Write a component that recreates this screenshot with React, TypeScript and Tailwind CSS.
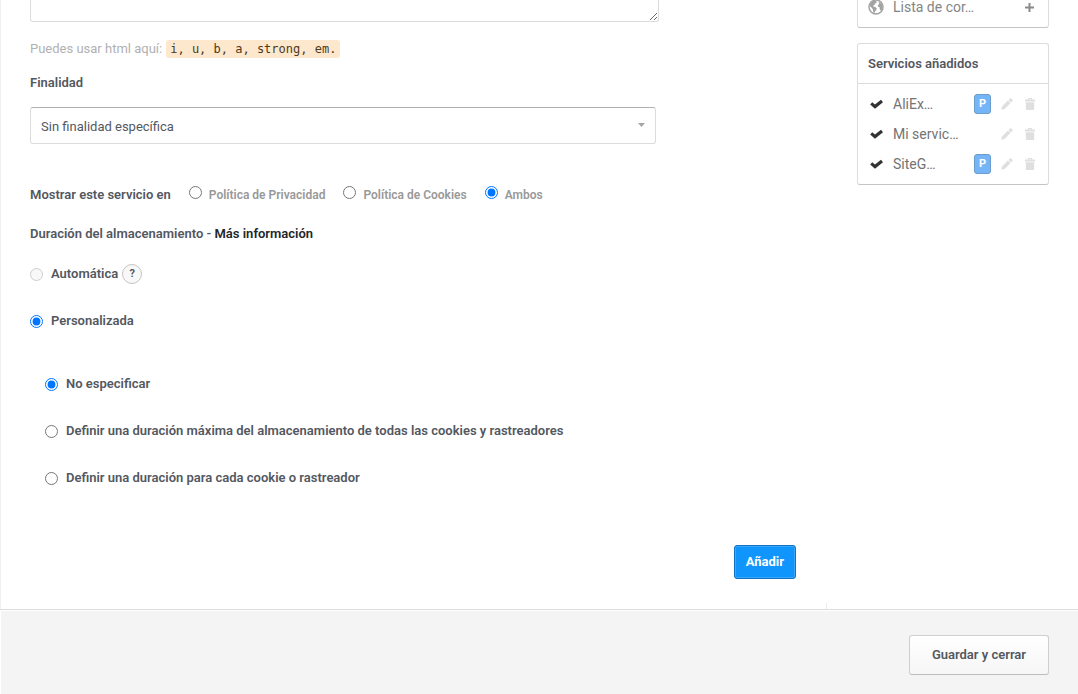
import { useState } from 'react';

const services = [
  { name: 'AliEx…', pro: true },
  { name: 'Mi servic…', pro: false },
  { name: 'SiteG…', pro: true },
];

const places = [
  { id: 'privacy', label: 'Política de Privacidad' },
  { id: 'cookies', label: 'Política de Cookies' },
  { id: 'both', label: 'Ambos' },
];

const storageOptions = [
  { id: 'none', label: 'No especificar' },
  { id: 'max', label: 'Definir una duración máxima del almacenamiento de todas las cookies y rastreadores' },
  { id: 'each', label: 'Definir una duración para cada cookie o rastreador' },
];

function GlobeIcon() {
  return (
    <svg className="w-4 h-4 text-[#a3a3a3]" viewBox="0 0 16 16" fill="none" aria-hidden="true">
      <circle cx="8" cy="8" r="7" stroke="currentColor" strokeWidth="1.5" />
      <path
        d="M2.6 3.8L5.6 1.6L8.2 2L9 3.4L7.6 4L7 5.4L5.6 6L5.4 7.4L7.6 8.2L8.8 9.6L8 11.4L6.8 12.4L6.6 14.6L5.2 13L4.8 10.2L3.4 8.6L1.6 7ZM10.6 2.6L13.4 4.4L14.6 7.2L13.8 10.6L12.6 11.8L11.6 10L11.8 8.6L10.2 7.8L9.8 6.2L11.2 5Z"
        fill="currentColor"
      />
    </svg>
  );
}

function CheckIcon() {
  return (
    <svg className="w-[13px] h-3 text-[#333333]" viewBox="0 0 13 12" fill="none" aria-hidden="true">
      <path d="M1.2 5.4L5 8.6L12 3" stroke="currentColor" strokeWidth="3.2" />
    </svg>
  );
}

function PencilIcon() {
  return (
    <svg className="w-3 h-3" viewBox="0 0 12 12" fill="currentColor" aria-hidden="true">
      <path d="M0.2 11.8L1 8.4L6.9 2.5L9.5 5.1L3.6 11ZM7.5 1.9L8.9 0.6Q9.7 0 10.4 0.6L11.4 1.6Q12 2.4 11.4 3.1L10.1 4.5Z" />
    </svg>
  );
}

function TrashIcon() {
  return (
    <svg className="w-3 h-3" viewBox="0 0 12 12" fill="currentColor" aria-hidden="true">
      <path d="M3.8 1.6V0.6Q3.8 0 4.4 0H7.6Q8.2 0 8.2 0.6V1.6H11V3.4H1V1.6ZM5 1.6H7V1H5ZM1.8 4.2H10.2V11.2Q10.2 12 9.4 12H2.6Q1.8 12 1.8 11.2Z" />
    </svg>
  );
}

export default function App() {
  const [place, setPlace] = useState('both');
  const [mode, setMode] = useState('custom');
  const [storage, setStorage] = useState('none');

  return (
    <div className="min-h-screen flex flex-col bg-white font-['Roboto',sans-serif] text-[13px] leading-5 text-[#53585f]">
      <div className="flex border-l border-[#f0f0f0]">
        {/* Service form */}
        <form className="flex-1 min-w-0 pl-[29px] pr-[30px] pb-[30px]" onSubmit={(e) => e.preventDefault()}>
          <textarea
            aria-label="Descripción"
            className="block w-[629px] max-w-full h-[22px] border border-t-0 border-[#dcdcdc] rounded-b-[3px]"
          />
          <p className="mt-[17px] flex items-center gap-1 text-[#b1b1b1]">
            <span>Puedes usar html aquí:</span>
            <code className="px-1 h-[18px] leading-[18px] rounded-[3px] bg-[#fde8cd] font-['DejaVu_Sans_Mono',monospace] text-xs text-[#4d3a20]">
              i, u, b, a, strong, em.
            </code>
          </p>

          <label htmlFor="purpose" className="block mt-[14px] font-semibold">
            Finalidad
          </label>
          <div className="relative mt-[14px] w-[626px] max-w-full">
            <select
              id="purpose"
              className="appearance-none block w-full h-[37px] pt-[2px] px-[10px] bg-white border border-[#dcdcdc] border-t-[#b0b0b0] rounded-[3px]"
            >
              <option>Sin finalidad específica</option>
            </select>
            <svg
              className="absolute right-[11px] top-4 w-[7px] h-1 text-[#a5a5a5] pointer-events-none"
              viewBox="0 0 7 4"
              fill="currentColor"
              aria-hidden="true"
            >
              <path d="M0 0H7L3.5 4Z" />
            </svg>
          </div>

          <fieldset className="mt-[41px] flex items-center gap-[18px]">
            <legend className="float-left font-semibold">Mostrar este servicio en</legend>
            {places.map((item) => (
              <label key={item.id} className="flex items-start gap-[7px] text-xs leading-5 font-semibold text-[#999999]">
                <input
                  type="radio"
                  name="place"
                  className="w-[13px] h-[13px] mt-px"
                  checked={place === item.id}
                  onChange={() => setPlace(item.id)}
                />
                {item.label}
              </label>
            ))}
          </fieldset>

          {/* Storage duration */}
          <p className="mt-[19px] font-semibold">
            Duración del almacenamiento - <a href="#info" className="text-[#22262a]">Más información</a>
          </p>
          <div className="mt-5 flex items-center gap-1 font-semibold">
            <label className="flex items-center gap-2">
              <input type="radio" name="mode" className="w-[13px] h-[13px]" disabled />
              Automática
            </label>
            <button
              type="button"
              aria-label="Ayuda"
              className="w-5 h-5 flex items-center justify-center rounded-full border border-[#c4c4c4] bg-[#f8f8f8] text-[11px] font-bold"
            >
              ?
            </button>
          </div>
          <label className="mt-[27px] flex items-center gap-2 font-semibold">
            <input
              type="radio"
              name="mode"
              className="w-[13px] h-[13px]"
              checked={mode === 'custom'}
              onChange={() => setMode('custom')}
            />
            Personalizada
          </label>

          <div className="mt-[43px] pl-[15px] flex flex-col gap-[27px]">
            {storageOptions.map((item) => (
              <label key={item.id} className="flex items-center gap-2 font-semibold">
                <input
                  type="radio"
                  name="storage"
                  className="w-[13px] h-[13px]"
                  checked={storage === item.id}
                  onChange={() => setStorage(item.id)}
                />
                {item.label}
              </label>
            ))}
          </div>

          <div className="mt-[57px] flex justify-end">
            <button
              type="submit"
              className="h-[34px] px-[11px] rounded-[3px] border border-[#1272c4] bg-[#0f95fb] shadow-[inset_0_0_0_1px_#39a8fc] font-bold text-white"
            >
              Añadir
            </button>
          </div>
        </form>

        {/* Sidebar */}
        <aside className="w-[252px] shrink-0 flex flex-col">
          <div className="ml-[31px] mr-[29px] h-7 flex items-start border border-t-0 border-[#dcdcdc] border-b-[#c4c4c4] rounded-b-[3px] pl-[10px] pr-[14px] text-sm text-[#858585]">
            <div className="flex-1 flex items-center gap-[9px] h-[14px]">
              <GlobeIcon />
              <span>Lista de cor…</span>
            </div>
            <button type="button" aria-label="Añadir servicio" className="flex items-center h-[14px] text-[#8a8a8a]">
              <svg className="w-[9px] h-[9px]" viewBox="0 0 9 9" fill="none" stroke="currentColor" strokeWidth="2" aria-hidden="true">
                <path d="M4.5 0V9M0 4.5H9" />
              </svg>
            </button>
          </div>

          <section className="ml-[31px] mr-[29px] mt-[15px] border border-[#dcdcdc] border-b-[#c4c4c4] rounded-[3px]">
            <h2 className="h-10 px-[10px] flex items-center border-b border-[#dcdcdc] font-semibold">
              Servicios añadidos
            </h2>
            <ul className="py-[5px]">
              {services.map((service) => (
                <li key={service.name} className="h-[30px] px-3 flex items-center">
                  <CheckIcon />
                  <span className="flex-1 ml-[10px] text-sm text-[#737373]">{service.name}</span>
                  {service.pro && (
                    <span className="w-[17px] h-5 mr-[10px] flex items-center justify-center rounded-[3px] border border-[#6a9ccc] bg-[#74b5f8] text-[11px] font-bold text-white">
                      P
                    </span>
                  )}
                  <button type="button" aria-label="Editar" className="text-[#dfdfdf]">
                    <PencilIcon />
                  </button>
                  <button type="button" aria-label="Eliminar" className="ml-[11px] text-[#dfdfdf]">
                    <TrashIcon />
                  </button>
                </li>
              ))}
            </ul>
          </section>
          <div className="mt-auto h-[6px] border-l border-[#ececec]" />
        </aside>
      </div>

      {/* Footer */}
      <footer className="flex-1 flex justify-end items-start pt-[25px] pb-[18px] pr-[29px] border-t border-[#dcdcdc] bg-[#f4f4f4] shadow-[inset_1px_1px_0_#ffffff]">
        <button
          type="button"
          className="h-10 px-[22px] rounded-[3px] border border-[#cfcfcf] border-b-[#bdbdbd] bg-gradient-to-b from-white to-[#f6f6f6] font-semibold"
        >
          Guardar y cerrar
        </button>
      </footer>
    </div>
  );
}
